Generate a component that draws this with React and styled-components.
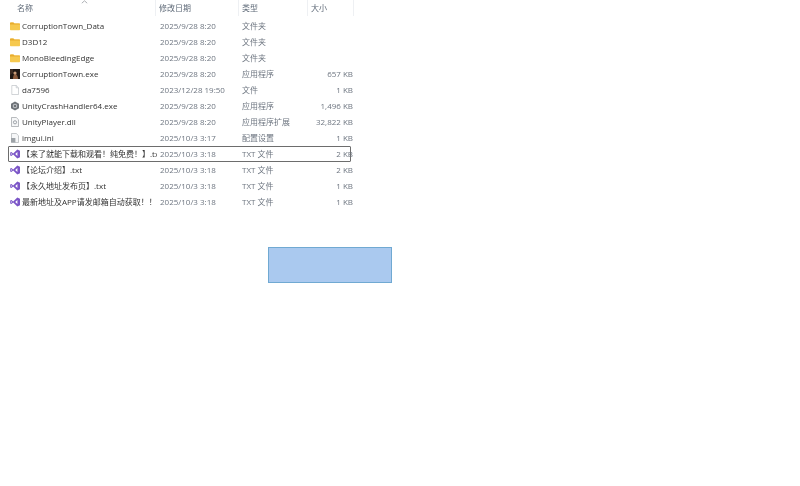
import React from "react";
import styled, { createGlobalStyle } from "styled-components";

const Global = createGlobalStyle`
  html, body { margin: 0; padding: 0; background: #fff; }
  body { font-family: "Open Sans", "Noto Sans CJK SC", sans-serif; }
`;

const Page = styled.div`
  position: relative;
  width: 800px;
  height: 486px;
  overflow: hidden;
  background: #fff;
  filter: blur(0.3px);
`;

const Columns = "148px 83px 69px 46px";

const Header = styled.div`
  display: grid;
  grid-template-columns: ${Columns};
  width: 346px;
  height: 16px;
  margin-left: 8px;
  margin-bottom: 2px;
`;

const HeadCell = styled.div`
  position: relative;
  height: 16px;
  line-height: 15px;
  font-size: 8px;
  color: #5f6a78;
  padding-left: ${(p) => p.$pad}px;
  border-right: 1px solid #eef0f3;
  box-sizing: border-box;
`;

const SortCaret = styled.svg`
  position: absolute;
  left: 73px;
  top: 0;
  width: 7px;
  height: 4px;
`;

const List = styled.div`
  display: flex;
  flex-direction: column;
  width: 343px;
  margin-left: 8px;
`;

const Row = styled.div`
  display: grid;
  grid-template-columns: ${Columns};
  height: 16px;
  width: 343px;
  box-sizing: border-box;
  align-items: center;
  font-size: 8px;
  line-height: 14px;
  border: 1px solid ${(p) => (p.$focused ? "#6d6d6d" : "transparent")};
  border-radius: 1px;
  margin-top: ${(p) => (p.$focused ? "0" : "0")};
`;

const NameCell = styled.div`
  display: flex;
  align-items: center;
  gap: 2px;
  padding-left: 1px;
  color: #333;
  min-width: 0;
  white-space: nowrap;
  overflow: hidden;
`;

const IconBox = styled.span`
  display: inline-flex;
  width: 10px;
  height: 10px;
  flex: none;
  margin-right: 0;
`;

const DateCell = styled.div`
  padding-left: 2px;
  margin-left: 1px;
  color: #6e7681;
  white-space: nowrap;
`;

const TypeCell = styled.div`
  padding-left: 2px;
  color: #6e7681;
  white-space: nowrap;
`;

const SizeCell = styled.div`
  text-align: right;
  color: #6e7681;
  white-space: nowrap;
  margin-left: -24px;
  padding-right: 2px;
`;

const Marquee = styled.div`
  position: absolute;
  left: 268px;
  top: 247px;
  width: 124px;
  height: 36px;
  box-sizing: border-box;
  background: #aac9ef;
  border: 1px solid #70a9d2;
`;

const Folder = () => (
  <svg viewBox="0 0 10 10" width="10" height="10">
    <path d="M0 2.2c0-.5.3-.8.8-.8h2.6l1 1H9.3c.4 0 .7.3.7.7v5.3c0 .5-.3.8-.7.8H.8C.3 9.2 0 8.9 0 8.4z" fill="#f6c94f" />
    <path d="M0 3.4h10V2.9c0-.3-.3-.5-.7-.5H4.4L3.4 1.4H.8C.3 1.4 0 1.7 0 2.2z" fill="#e8ac2e" />
  </svg>
);

const ExeGame = () => (
  <svg viewBox="0 0 10 10" width="10" height="10">
    <rect width="10" height="10" fill="#1f1714" />
    <path d="M3 10c0-3 .8-5 2.2-5S8 7 8 10z" fill="#8a5a3c" />
    <circle cx="5" cy="4" r="1.6" fill="#c79a78" />
    <path d="M0 0h3v4L0 6z" fill="#3b2a22" />
  </svg>
);

const Blank = () => (
  <svg viewBox="0 0 10 10" width="10" height="10">
    <path d="M1.8.5h4.4l2.3 2.3v6.7H1.8z" fill="#fff" stroke="#b4b8bd" strokeWidth=".6" />
    <path d="M6.2.5v2.3h2.3" fill="none" stroke="#b4b8bd" strokeWidth=".6" />
  </svg>
);

const Gear = () => (
  <svg viewBox="0 0 10 10" width="10" height="10">
    <path d="M5 .4 9 2.7v4.6L5 9.6 1 7.3V2.7z" fill="#6f7479" />
    <circle cx="5" cy="5" r="2.3" fill="#b9bcc0" />
    <circle cx="5" cy="5" r="1" fill="#55595d" />
  </svg>
);

const Dll = () => (
  <svg viewBox="0 0 10 10" width="10" height="10">
    <path d="M1.5.5h4.8l2.2 2.2v6.8h-7z" fill="#f6f7f8" stroke="#8b9096" strokeWidth=".6" />
    <circle cx="5" cy="5.3" r="1.6" fill="none" stroke="#7d8389" strokeWidth=".7" />
  </svg>
);

const Ini = () => (
  <svg viewBox="0 0 10 10" width="10" height="10">
    <path d="M1.5.5h4.8l2.2 2.2v6.8h-7z" fill="#f6f7f8" stroke="#a0a4a9" strokeWidth=".6" />
    <rect x="1" y="5" width="4.4" height="4.4" fill="#9ea3a8" />
  </svg>
);

const VS = () => (
  <svg viewBox="0 0 10 10" width="10" height="10">
    <path d="M7.3.6 10 1.8v6.4L7.3 9.4 3.2 5.6 1.4 7 .2 6.4V3.6L1.4 3l1.8 1.4zM7.4 3 5.2 5l2.2 2zM1.3 4.1v1.8L2.3 5z" fill="#7b55c7" />
  </svg>
);

const icons = { folder: Folder, game: ExeGame, blank: Blank, gear: Gear, dll: Dll, ini: Ini, vs: VS };

const rows = [
  { i: "folder", n: "CorruptionTown_Data", d: "2025/9/28 8:20", t: "文件夹", s: "" },
  { i: "folder", n: "D3D12", d: "2025/9/28 8:20", t: "文件夹", s: "" },
  { i: "folder", n: "MonoBleedingEdge", d: "2025/9/28 8:20", t: "文件夹", s: "" },
  { i: "game", n: "CorruptionTown.exe", d: "2025/9/28 8:20", t: "应用程序", s: "657 KB" },
  { i: "blank", n: "da7596", d: "2023/12/28 19:50", t: "文件", s: "1 KB" },
  { i: "gear", n: "UnityCrashHandler64.exe", d: "2025/9/28 8:20", t: "应用程序", s: "1,496 KB" },
  { i: "dll", n: "UnityPlayer.dll", d: "2025/9/28 8:20", t: "应用程序扩展", s: "32,822 KB" },
  { i: "ini", n: "imgui.ini", d: "2025/10/3 3:17", t: "配置设置", s: "1 KB" },
  { i: "vs", n: "【来了就能下载和观看！纯免费！】.txt", d: "2025/10/3 3:18", t: "TXT 文件", s: "2 KB", f: true },
  { i: "vs", n: "【论坛介绍】.txt", d: "2025/10/3 3:18", t: "TXT 文件", s: "2 KB" },
  { i: "vs", n: "【永久地址发布页】.txt", d: "2025/10/3 3:18", t: "TXT 文件", s: "1 KB" },
  { i: "vs", n: "最新地址及APP请发邮箱自动获取！！！ ...", d: "2025/10/3 3:18", t: "TXT 文件", s: "1 KB" },
];

export default function App() {
  return (
    <Page>
      <Global />
      <Header>
        <HeadCell $pad={9}>
          名称
          <SortCaret viewBox="0 0 7 4">
            <path d="M.8 3.2 3.5.8l2.7 2.4" fill="none" stroke="#8b8f96" strokeWidth=".7" />
          </SortCaret>
        </HeadCell>
        <HeadCell $pad={3}>修改日期</HeadCell>
        <HeadCell $pad={3}>类型</HeadCell>
        <HeadCell $pad={3}>大小</HeadCell>
      </Header>
      <List>
        {rows.map((r) => {
          const Icon = icons[r.i];
          return (
            <Row key={r.n} $focused={r.f}>
              <NameCell>
                <IconBox>
                  <Icon />
                </IconBox>
                <span>{r.n}</span>
              </NameCell>
              <DateCell>{r.d}</DateCell>
              <TypeCell>{r.t}</TypeCell>
              <SizeCell>{r.s}</SizeCell>
            </Row>
          );
        })}
      </List>
      <Marquee />
    </Page>
  );
}
